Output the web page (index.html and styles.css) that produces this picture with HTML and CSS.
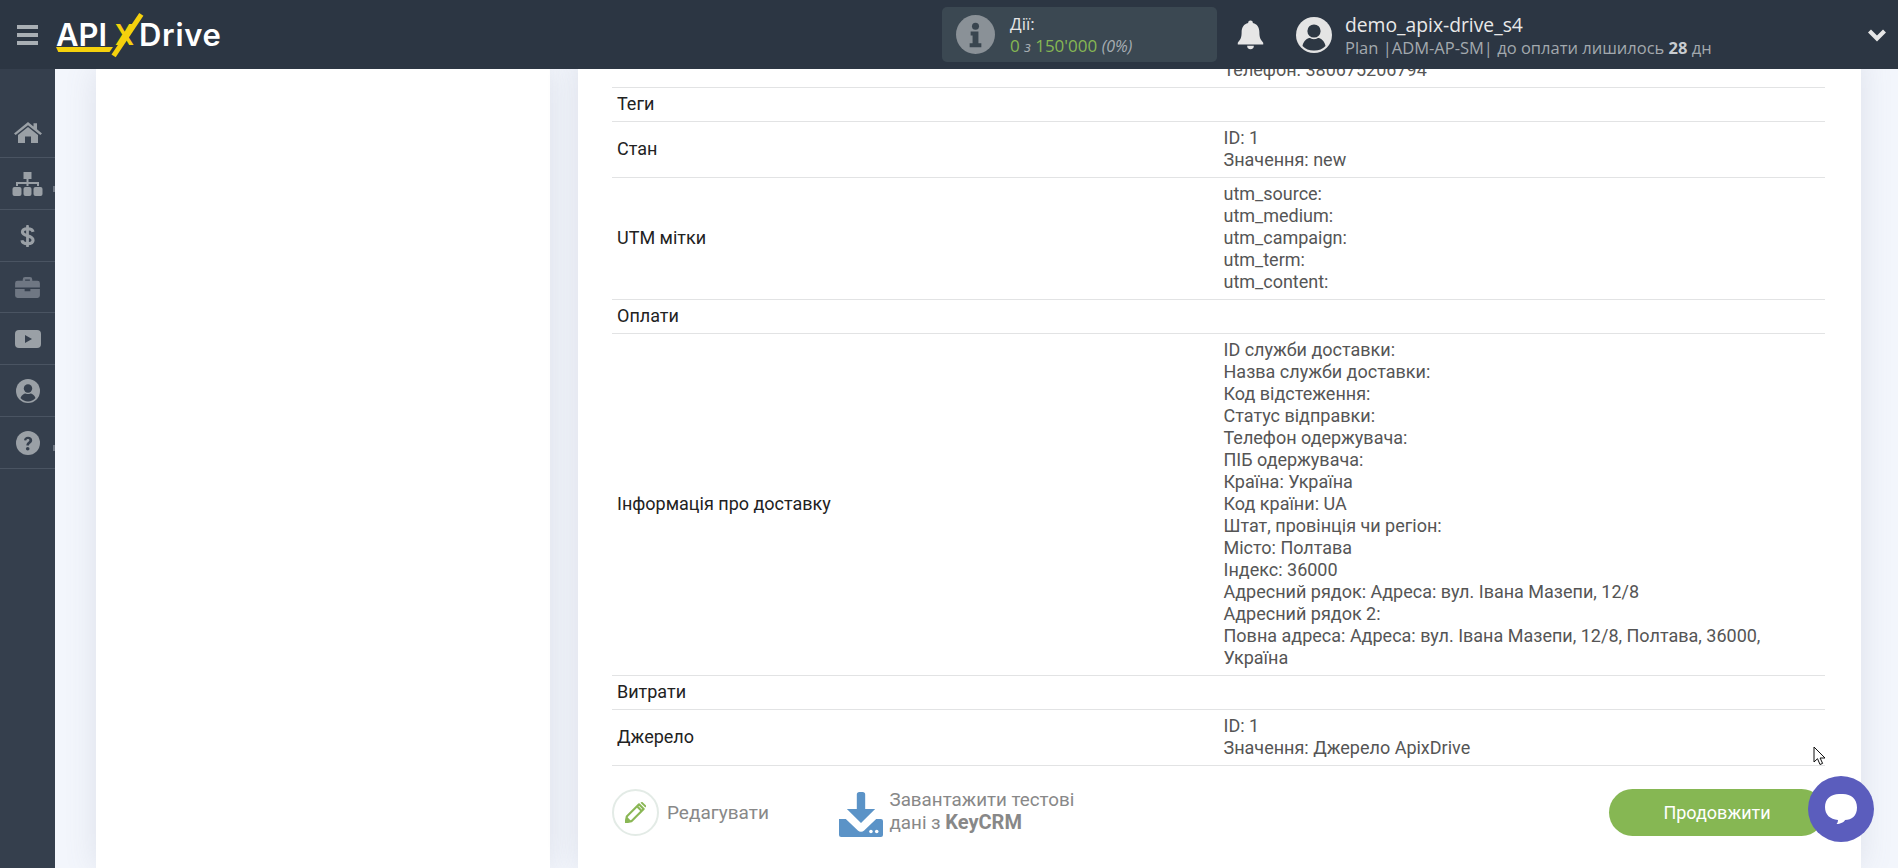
FILE: index.html
```html
<!DOCTYPE html>
<html lang="uk">
<head>
<meta charset="utf-8">
<title>ApiX-Drive</title>
<link rel="stylesheet" href="styles.css">
</head>
<body>
<header class="topbar">
  <div class="burger"><span></span><span></span><span></span></div>
  <div class="logo">
    <span class="logo-api">API</span><span class="logo-x">X</span><i class="logo-slash"></i><span class="logo-drive">Drive</span>
    <i class="logo-bar"></i>
  </div>
  <div class="actions-box">
    <svg class="actions-icon" viewBox="0 0 40 40"><circle cx="20" cy="20" r="20" fill="#8a9197"/><circle cx="20" cy="11.5" r="3.6" fill="#39454f"/><path d="M15 17h8v12h3v4H14v-4h3v-8h-2z" fill="#39454f"/></svg>
    <div class="actions-text">
      <div class="actions-title">Дії:</div>
      <div class="actions-count">0 <em class="small-z">з</em> 150'000 <em>(0%)</em></div>
    </div>
  </div>
  <svg class="bell" viewBox="0 0 28 30"><path d="M14 0a2.4 2.4 0 0 1 2.4 2.6C21 3.600 23.200 7.400 23.200 12c0 6 1.300 8.200 4 11v1.800H.8V23c2.700-2.800 4-5 4-11 0-4.600 2.200-8.400 6.800-9.400A2.400 2.400 0 0 1 14 0z" fill="#e6e6e6"/><path d="M10.500 26.200h7a3.500 3.500 0 0 1-7 0z" fill="#e6e6e6"/></svg>
  <svg class="avatar" viewBox="0 0 36 36"><circle cx="18" cy="18" r="18" fill="#e4e4e4"/><circle cx="18" cy="14" r="6.600" fill="#2d3743"/><path d="M6.500 29c1-5.500 5-8 7.500-8 1.500.8 2.600 1.200 4 1.200s2.500-.4 4-1.200c2.500 0 6.500 2.500 7.500 8A15.500 15.500 0 0 1 18 33.500 15.500 15.500 0 0 1 6.500 29z" fill="#2d3743"/></svg>
  <div class="user">
    <div class="user-name">demo_apix-drive_s4</div>
    <div class="user-plan">Plan |ADM-AP-SM| до оплати лишилось <b>28</b> дн</div>
  </div>
  <svg class="chevron" viewBox="0 0 20 14"><path d="M2.500 3 10 10.500 17.500 3" fill="none" stroke="#e6e6e6" stroke-width="4.200"/></svg>
</header>

<div class="layout">
  <nav class="sidebar">
    <div class="nav-item">
      <svg viewBox="0 0 28 24" class="nav-icon home" preserveAspectRatio="none"><path d="M14 1 0 13.500l1.700 1.800L14 4.500l12.300 10.800 1.700-1.800-5-4.400V2.500h-3.500v3.400z" fill="#9aa0a6"/><path d="M14 6.500 4 15.300V24h7v-7h6v7h7v-8.700z" fill="#9aa0a6"/></svg>
    </div>
    <div class="nav-item">
      <svg viewBox="0 0 30 24" class="nav-icon wide"><path d="M11 0h8v7h-3v3h10.500v4h-2v-2H16v2h-2v-2H5.500v2h-2v-4H14V7h-3z" fill="#9aa0a6"/><rect x="0" y="15" width="9" height="9" rx="2" fill="#9aa0a6"/><rect x="11" y="15" width="8" height="9" rx="2" fill="#9aa0a6"/><rect x="21" y="15" width="9" height="9" rx="2" fill="#9aa0a6"/></svg>
      <i class="nav-tip"></i>
    </div>
    <div class="nav-item">
      <svg viewBox="0 0 16 26" class="nav-icon dollar"><path d="M14 8.500C13.500 6 11 5.200 8 5.200 5 5.200 2.500 6.300 2.500 8.800c0 5 11.500 3 11.500 8.700 0 2.700-2.800 3.700-6 3.700s-5.600-1-6-3.700" fill="none" stroke="#9aa0a6" stroke-width="3.400"/><rect x="6.500" y="1" width="3" height="24" rx="1" fill="#9aa0a6"/></svg>
    </div>
    <div class="nav-item nav-item-short">
      <svg viewBox="0 0 26 22" class="nav-icon brief"><path d="M8 4V2.500A2.500 2.500 0 0 1 10.500 0h5A2.500 2.500 0 0 1 18 2.500V4h5.500A2.500 2.500 0 0 1 26 6.500V11H0V6.500A2.500 2.500 0 0 1 2.500 4zm2.500 0h5V2.500h-5z" fill="#6f7783"/><path d="M0 12.500h10V15h6v-2.500h10v7a2.500 2.500 0 0 1-2.500 2.500h-21A2.500 2.500 0 0 1 0 19.500z" fill="#6f7783"/></svg>
    </div>
    <div class="nav-item">
      <svg viewBox="0 0 26 18" class="nav-icon yt"><rect width="26" height="18" rx="4" fill="#9aa0a6"/><path d="M10 5l7 4-7 4z" fill="#353f4d"/></svg>
    </div>
    <div class="nav-item">
      <svg viewBox="0 0 24 24" class="nav-icon round"><circle cx="12" cy="12" r="12" fill="#9aa0a6"/><circle cx="12" cy="9.500" r="4.200" fill="#353f4d"/><path d="M4.500 19c1-3 3.500-4.500 5-4.500 1 .4 1.700.6 2.500.6s1.500-.2 2.500-.6c1.500 0 4 1.500 5 4.500a10 10 0 0 1-15 0z" fill="#353f4d"/></svg>
    </div>
    <div class="nav-item">
      <svg viewBox="0 0 24 24" class="nav-icon round"><circle cx="12" cy="12" r="12" fill="#9aa0a6"/><path d="M8 9.200C8.200 7 9.800 5.800 12 5.800c2.400 0 4.200 1.400 4.200 3.500 0 3-3.200 3-3.200 5.200h-2.600c0-3.500 3-3.500 3-5.200 0-.8-.6-1.300-1.500-1.300-1 0-1.600.6-1.700 1.500z" fill="#353f4d"/><circle cx="11.700" cy="17.700" r="1.800" fill="#353f4d"/></svg>
      <i class="nav-tip"></i>
    </div>
  </nav>

  <main class="content">
    <section class="card card-left"></section>
    <section class="card card-right">
      <table class="data">
        <tr><td></td><td>Телефон: 380675206794</td></tr>
        <tr><td>Теги</td><td></td></tr>
        <tr><td>Стан</td><td>ID: 1<br>Значення: new</td></tr>
        <tr><td>UTM мітки</td><td>utm_source:<br>utm_medium:<br>utm_campaign:<br>utm_term:<br>utm_content:</td></tr>
        <tr><td>Оплати</td><td></td></tr>
        <tr><td>Інформація про доставку</td><td>ID служби доставки:<br>Назва служби доставки:<br>Код відстеження:<br>Статус відправки:<br>Телефон одержувача:<br>ПІБ одержувача:<br>Країна: Україна<br>Код країни: UA<br>Штат, провінція чи регіон:<br>Місто: Полтава<br>Індекс: 36000<br>Адресний рядок: Адреса: вул. Івана Мазепи, 12/8<br>Адресний рядок 2:<br>Повна адреса: Адреса: вул. Івана Мазепи, 12/8, Полтава, 36000, Україна</td></tr>
        <tr><td>Витрати</td><td></td></tr>
        <tr><td>Джерело</td><td>ID: 1<br>Значення: Джерело ApixDrive</td></tr>
      </table>
      <div class="footer">
        <div class="edit">
          <span class="edit-circle">
            <svg viewBox="1.500 2.500 18 18"><path d="M3 15 13.500 4.500l4 4L7 19l-5 1z M11.800 6.200l4 4" fill="none" stroke="#8ab755" stroke-width="1.800" stroke-linejoin="round"/><path d="M14.800 3.200l1.300-1 3.800 3.800-1 1.300z" fill="#8ab755"/><path d="M2 20l1-5 4 4z" fill="#8ab755"/></svg>
          </span>
          <span>Редагувати</span>
        </div>
        <div class="download">
          <svg class="download-icon" viewBox="0 0 42 45" preserveAspectRatio="none"><path d="M17 2.500A2.500 2.500 0 0 1 19.500 0h3A2.500 2.500 0 0 1 25 2.500V17h9.500L21 31 7.500 17H17z" fill="#5b93c7"/><path d="M0 27h6.500L18 38.500c1.700 1.600 4.300 1.600 6 0L35.500 27H40a2 2 0 0 1 2 2v14a2 2 0 0 1-2 2H2a2 2 0 0 1-2-2z" fill="#5b93c7"/><circle cx="30.500" cy="39.500" r="1.700" fill="#fff"/><circle cx="36" cy="39.500" r="1.700" fill="#fff"/></svg>
          <span class="download-text">Завантажити тестові<br>дані з <b>KeyCRM</b></span>
        </div>
        <button class="continue">Продовжити</button>
      </div>
    </section>
  </main>
</div>

<svg class="cursor" viewBox="0 0 14 20"><path d="M1 1v15l3.500-3.300L7 18.500l2.600-1.100-2.500-5.400H12z" fill="#fff" stroke="#111" stroke-width="1"/></svg>
<div class="chat">
  <svg viewBox="0 0 32 32"><path d="M14 1h4c8 0 14 5 14 13.500S26.500 27 20 27c-.5 2-5 4-8.500 4 1-1 1.500-2.500 1.500-4C5 26 0 22 0 14S6 1 14 1z" fill="#fff"/></svg>
</div>
</body>
</html>
```

FILE: styles.css
```css
* { box-sizing: border-box; }
html, body { margin: 0; height: 100%; overflow: hidden; }
body { font-family: Roboto, "Noto Sans", sans-serif; font-size: 18px; background: #f3f6fc; display: flex; flex-direction: column; }

.topbar { flex: 0 0 69px; height: 69px; background: #2c3643; display: flex; align-items: center; font-family: "Open Sans", sans-serif; color: #e6e6e6; }
.burger { width: 21px; margin-left: 17px; display: flex; flex-direction: column; gap: 4px; }
.burger span { display: block; height: 4px; background: #a9afb4; }

.logo { position: relative; margin-left: 17px; width: 167px; height: 50px; display: flex; font-family: Inter, sans-serif; font-size: 31px; font-weight: 600; color: #fff; line-height: 50px; }
.logo-api { width: 57px; padding-left: 1px; flex: none; }
.logo-x { color: #f5d10d; font-family: Roboto, sans-serif; font-weight: 500; font-size: 30px; margin-left: 3px; width: 24px; flex: none; }
.logo-slash { position: absolute; left: 70px; top: 0; width: 4.500px; height: 50px; background: #f5d10d; transform: rotate(33.700deg); }
.logo-drive { letter-spacing: .7px; }
.logo-bar { position: absolute; left: 1px; top: 37.500px; width: 57px; height: 5px; background: #f5d10d; clip-path: polygon(0 0, 100% 0, 94% 100%, 4% 100%); }

.actions-box { margin-left: 720px; width: 275px; height: 55px; background: #3b4852; border-radius: 5px; display: flex; align-items: center; padding-left: 14px; flex: none; }
.actions-icon { width: 39px; height: 39px; flex: none; }
.actions-text { margin-left: 15px; font-size: 17px; line-height: 22px; }
.actions-title { color: #e6e6e6; }
.actions-count { color: #86b753; }
.actions-count em { color: #a6adb2; font-style: italic; font-size: 16px; }
.actions-count .small-z { font-size: 15px; }

.bell { width: 27px; height: 30px; margin-left: 20px; flex: none; }
.avatar { width: 36px; height: 36px; margin-left: 32px; flex: none; }
.user { margin-left: 13px; }
.user-name { font-size: 19.300px; line-height: 25px; color: #e9e9e9; }
.user-plan { font-size: 16.500px; line-height: 21px; color: #a3a9ae; }
.user-plan b { color: #c8ccd0; }
.chevron { width: 20px; height: 14px; margin-left: auto; margin-right: 11px; flex: none; }

.layout { flex: 1; display: flex; min-height: 0; }
.sidebar { flex: 0 0 55px; background: #353f4d; padding-top: 37px; }
.nav-item { position: relative; height: 52px; border-bottom: 1px solid #4a5462; display: flex; align-items: center; justify-content: center; }
.nav-item-short { height: 51px; }
.nav-icon.home { width: 28px; height: 22px; }
.nav-icon.wide { width: 31px; height: 24px; }
.nav-icon.dollar { width: 15px; height: 24px; }
.nav-icon.brief { width: 25px; height: 21px; }
.nav-icon.yt { width: 26px; height: 18px; }
.nav-icon.round { width: 24px; height: 24px; }
.nav-tip { position: absolute; right: 0; top: 28px; width: 2px; height: 6px; background: #6f7783; }

.content { flex: 1; display: flex; gap: 28px; padding-left: 41px; align-items: stretch; overflow: hidden; min-width: 0; }
.card { background: #fff; box-shadow: 0 0 30px rgba(110, 120, 140, .16); }
.card-left { flex: 0 0 454px; }
.card-right { flex: 0 0 1283px; padding: 0 36px 0 34px; margin-top: -15px; }

.data { width: 100%; table-layout: fixed; border-collapse: separate; border-spacing: 0; line-height: 22px; color: #222; }
.data td { width: 50%; padding: 5px 5px 6px; border-bottom: 1px solid #e2e3e4; vertical-align: middle; }
.data td + td { color: #555; }

.footer { display: flex; align-items: center; margin-top: 23px; color: #888; font-size: 19px; }
.edit { display: flex; align-items: center; gap: 8px; width: 226.500px; }
.edit-circle { width: 47px; height: 47px; border: 2px solid #e3ebe6; border-radius: 50%; display: flex; align-items: center; justify-content: center; }
.edit-circle svg { width: 21px; height: 21px; }
.download { display: flex; align-items: flex-start; gap: 7px; height: 47px; padding-top: 3px; font-size: 18.800px; }
.download-icon { width: 44px; height: 45px; }
.download-text { line-height: 22px; margin-top: -3px; }
.download-text b { font-size: 20px; }
.continue { margin-left: auto; width: 216px; height: 47px; border: 0; border-radius: 24px; background: #86b753; color: #fff; font: 400 18px Roboto, sans-serif; }

.cursor { position: absolute; left: 1813px; top: 746px; width: 14px; height: 20px; }
.chat { position: absolute; left: 1808px; top: 776px; width: 66px; height: 66px; border-radius: 50%; background: #5b5dbd; display: flex; align-items: center; justify-content: center; }
.chat svg { width: 32px; height: 32px; }
```
